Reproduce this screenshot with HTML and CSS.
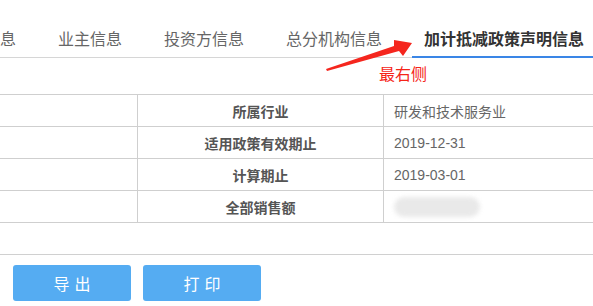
FILE: index.html
```html
<!DOCTYPE html>
<html>
<head>
<meta charset="utf-8">
<link rel="stylesheet" href="styles.css">
</head>
<body>
<div class="page">
  <div class="tabs">
    <div class="tab">基本信息</div>
    <div class="tab">业主信息</div>
    <div class="tab">投资方信息</div>
    <div class="tab">总分机构信息</div>
    <div class="tab active">加计抵减政策声明信息</div>
  </div>
  <svg class="arrow" width="593" height="100" viewBox="0 0 593 100">
    <polygon points="326,69 394,46 394,40 412,43 403,56 399,51 327,71" fill="#f5261e"/>
  </svg>
  <div class="note">最右侧</div>
  <table class="info">
    <tr><td class="c1"></td><td class="lbl">所属行业</td><td class="val">研发和技术服务业</td></tr>
    <tr><td class="c1"></td><td class="lbl">适用政策有效期止</td><td class="val">2019-12-31</td></tr>
    <tr><td class="c1"></td><td class="lbl">计算期止</td><td class="val">2019-03-01</td></tr>
    <tr><td class="c1"></td><td class="lbl">全部销售额</td><td class="val"><div class="blur"></div></td></tr>
  </table>
  <div class="footer">
    <button class="btn">导出</button>
    <button class="btn">打印</button>
  </div>
</div>
</body>
</html>
```
FILE: styles.css
```css
* { box-sizing: border-box; }
html, body { margin: 0; padding: 0; background: #fff; }
body {
  width: 593px;
  height: 306px;
  overflow: hidden;
  font-family: "Liberation Sans", "Noto Sans CJK SC", sans-serif;
}
.page { position: relative; width: 593px; height: 306px; overflow: hidden; }
.tabs {
  display: flex;
  gap: 18px;
  height: 58px;
  border-bottom: 1px solid #d6d6d6;
  margin-left: -60px;
  white-space: nowrap;
}
.tab {
  flex: none;
  padding: 30px 12px 0;
  height: 57px;
  font-size: 16px;
  line-height: 20px;
  color: #666;
}
.tab.active {
  color: #333;
  font-weight: bold;
  border-bottom: 2px solid #3a86e6;
  height: 58px;
}
.arrow { position: absolute; left: 0; top: 0; }
.note {
  position: absolute;
  left: 379px;
  top: 65px;
  font-size: 16px;
  line-height: 20px;
  color: #f52418;
}
.info {
  border-collapse: collapse;
  margin-top: 36px;
  margin-left: -1px;
  width: 620px;
  table-layout: fixed;
}
.info td {
  border: 1px solid #cfcfcf;
  height: 32px;
  padding: 0;
  font-size: 14px;
}
.c1 { width: 138px; }
.lbl {
  width: 246px;
  text-align: center;
  font-weight: bold;
  color: #555;
}
.val {
  padding-left: 10px !important;
  color: #666;
}
.blur {
  width: 86px;
  height: 20px;
  background: #e4e4e4;
  border-radius: 10px;
  filter: blur(2px);
  opacity: 0.8;
}
.footer {
  margin-top: 31px;
  border-top: 1px solid #d0d0d0;
  padding: 10px 13px 0;
  display: flex;
  gap: 12px;
}
.btn {
  width: 118px;
  height: 36px;
  border: none;
  border-radius: 3px;
  background: #55acf2;
  color: #fff;
  font-family: "Noto Sans CJK SC", sans-serif;
  font-size: 16px;
  letter-spacing: 5px;
  text-indent: 5px;
  padding: 0;
}
```
